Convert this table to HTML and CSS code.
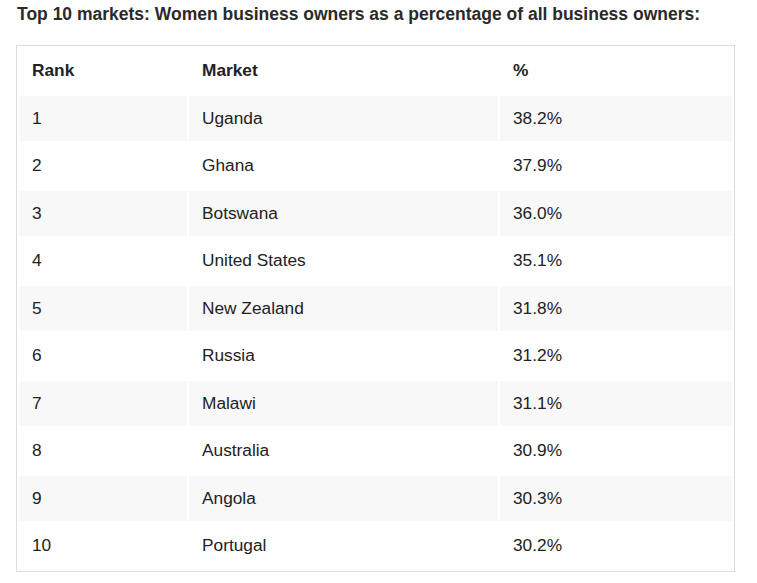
FILE: index.html
```html
<!DOCTYPE html>
<html>
<head>
<meta charset="utf-8">
<link rel="stylesheet" href="styles.css">
</head>
<body>
<div class="page">
  <h3 class="title">Top 10 markets: Women business owners as a percentage of all business owners:</h3>
  <div class="box">
    <table class="data">
      <colgroup><col class="c1"><col class="c2"><col class="c3"></colgroup>
      <thead>
        <tr><th>Rank</th><th>Market</th><th>%</th></tr>
      </thead>
      <tbody>
        <tr><td>1</td><td>Uganda</td><td>38.2%</td></tr>
        <tr><td>2</td><td>Ghana</td><td>37.9%</td></tr>
        <tr><td>3</td><td>Botswana</td><td>36.0%</td></tr>
        <tr><td>4</td><td>United States</td><td>35.1%</td></tr>
        <tr><td>5</td><td>New Zealand</td><td>31.8%</td></tr>
        <tr><td>6</td><td>Russia</td><td>31.2%</td></tr>
        <tr><td>7</td><td>Malawi</td><td>31.1%</td></tr>
        <tr><td>8</td><td>Australia</td><td>30.9%</td></tr>
        <tr><td>9</td><td>Angola</td><td>30.3%</td></tr>
        <tr><td>10</td><td>Portugal</td><td>30.2%</td></tr>
      </tbody>
    </table>
  </div>
</div>
</body>
</html>
```
FILE: styles.css
```css
html, body {
  margin: 0;
  padding: 0;
  background: #ffffff;
}
body {
  font-family: "Liberation Sans", Arial, sans-serif;
  color: #222222;
}
.page {
  padding: 4px 22px 0 16px;
}
.title {
  margin: 0 0 21px 1px;
  font-size: 17.5px;
  line-height: 20px;
  font-weight: bold;
  color: #2a2a2a;
  white-space: nowrap;
}
.box {
  border: 1px solid #dddddd;
  width: 717px;
}
.data {
  width: 100%;
  border-collapse: separate;
  border-spacing: 2px;
  table-layout: fixed;
}
.c1 { width: 168px; }
.c2 { width: 309px; }
.c3 { width: 232px; }
.data th,
.data td {
  text-align: left;
  padding: 12px 12px 12px 13px;
  font-size: 17.3px;
  line-height: 21.5px;
  color: #222222;
}
.data th {
  font-weight: bold;
}
.data tbody tr:nth-child(odd) td {
  background: #f8f8f8;
}
```
